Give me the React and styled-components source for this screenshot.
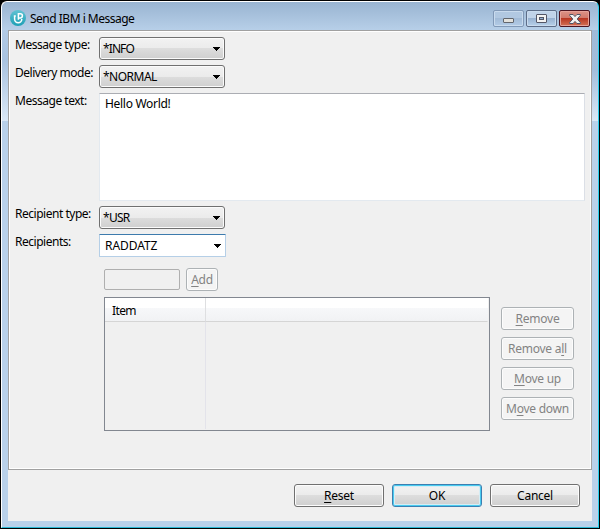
import styled, { createGlobalStyle, css } from 'styled-components'

const GlobalStyle = createGlobalStyle`
  * {
    box-sizing: border-box;
  }

  body {
    margin: 0;
    background: #000;
    font-family: 'Noto Sans', 'Open Sans', sans-serif;
    font-size: 12px;
    line-height: 16px;
    color: #000;
  }
`

const Window = styled.div`
  width: 600px;
  height: 529px;
  padding: 1px 1px 1px 0;
  border-left: 1px solid #000;
  background: #000;
`

const Frame = styled.div`
  height: 527px;
  display: flex;
  flex-direction: column;
  padding: 0 6px 6px;
  border: 1px solid #fff;
  border-right-color: #2ad0ee;
  border-bottom-color: #2bb8d4;
  border-radius: 6px 6px 0 0;
  background:
    linear-gradient(#9fbad8 0, #a3bedc 40px, #dae8f6 100%) right 28px / 6px 91px no-repeat,
    linear-gradient(#b2cae5 0, #a9c3e0 30px, #dae8f6 100%) left 28px / 6px 91px no-repeat,
    linear-gradient(#99b4d1 0, #b9d1ea 30px, #b9d1ea 100%);
`

const TitleBar = styled.header`
  flex: none;
  display: flex;
  align-items: flex-start;
  height: 28px;
  padding: 8px 2px 0 2px;
`

const Title = styled.h1`
  flex: 1;
  margin: 1px 0 0 4px;
  font-size: 12px;
  font-weight: 400;
  letter-spacing: -0.5px;
`

const WindowButton = styled.button`
  display: flex;
  align-items: center;
  justify-content: center;
  width: 31px;
  height: 17px;
  margin-left: 2px;
  padding: 0;
  border: 1px solid ${({ $kind }) => ({ min: '#8199b7', max: '#5d6d88', close: '#4c1420' })[$kind]};
  border-radius: 2px;
  box-shadow: inset 0 0 0 1px ${({ $kind }) => ($kind === 'close' ? '#e5a198' : '#c9dbee')};
  background: ${({ $kind }) =>
    ({
      min: 'linear-gradient(#b1c8e1 50%, #a2bbd7 50%, #b3cce7)',
      max: 'linear-gradient(#c0d3e9 50%, #98b2d1 50%, #b7d1ea)',
      close: 'linear-gradient(#dc9388 0, #d07769 50%, #b93723 50%, #d37256)',
    })[$kind]};
`

const Client = styled.main`
  flex: 1;
  display: flex;
  flex-direction: column;
  background: #f0f0f0;
`

const Panel = styled.section`
  height: 440px;
  padding: 6px 6px 0;
  border: 1px solid #a0a0a0;
  box-shadow: inset 0 0 0 1px #fff;
`

const Form = styled.div`
  display: grid;
  grid-template-columns: 84px 486px;
  grid-template-rows: 23px 23px 108px 23px 23px;
  row-gap: 5px;
`

const Label = styled.label`
  white-space: nowrap;
  letter-spacing: -0.48px;
`

const comboButton = css`
  border: 1px solid #707070;
  border-radius: 3px;
  box-shadow: inset 0 0 0 1px #fbfbfb;
  background: linear-gradient(#f2f2f2 0, #ebebeb 50%, #dddddd 50%, #cfcfcf 100%);
`

const editable = css`
  border: 1px solid #b5cfe7;
  border-top-color: #3d7bad;
  border-radius: 1px;
  background: #fff;
`

const Combo = styled.div`
  display: flex;
  align-items: center;
  justify-content: space-between;
  width: ${({ $editable }) => ($editable ? '127px' : '126px')};
  height: 23px;
  padding: 0 4px 0 ${({ $editable }) => ($editable ? '5px' : '3px')};
  letter-spacing: ${({ $track }) => $track || '-0.5px'};
  ${({ $editable }) => ($editable ? editable : comboButton)}
`

const MessageBox = styled.div`
  padding: 2px 5px;
  border: 1px solid #e3e9ef;
  border-top-color: #abadb3;
  border-right-color: #dbdfe6;
  background: #fff;
  letter-spacing: -0.3px;
`

const ItemEditor = styled.div`
  display: grid;
  grid-template-columns: 386px 73px;
  column-gap: 11px;
  row-gap: 6px;
  padding: 11px 0 0 89px;
`

const AddRow = styled.div`
  grid-column: 1 / -1;
  display: flex;
  align-items: center;
  gap: 6px;
`

const ItemInput = styled.input`
  width: 76px;
  height: 21px;
  padding: 0;
  border: 1px solid #afafaf;
  border-radius: 2px;
  background: #f0f0f0;
`

const Button = styled.button`
  width: ${({ $width }) => $width}px;
  height: 23px;
  padding: 0;
  font: inherit;
  line-height: 19px;
  letter-spacing: -0.25px;
  white-space: nowrap;
  color: #000;
  border: 1px solid #707070;
  border-radius: 3px;
  box-shadow: inset 0 0 0 1px #fcfcfc;
  background: linear-gradient(#f2f2f2 0, #ebebeb 50%, #dddddd 50%, #cfcfcf 100%);

  &:disabled {
    color: #838383;
    border-color: #adb2b5;
    background: #f4f4f4;
  }

  ${({ $primary }) =>
    $primary &&
    css`
      border-color: #3c7fb1;
      box-shadow: inset 0 0 0 1px #48cbf0, inset 0 0 0 2px #d5edf5;
    `}
`

const Key = styled.span`
  text-decoration: underline;
  text-underline-offset: 2px;
  text-decoration-thickness: 1px;
  text-decoration-skip-ink: none;
`

const Table = styled.div`
  display: grid;
  grid-template-columns: 101px 1fr;
  grid-template-rows: 24px 1fr;
  height: 134px;
  padding: 0 1px 1px 0;
  border: 1px solid #828790;
`

const HeaderCell = styled.div`
  padding: 5px 7px 0;
  border-right: 1px solid ${({ $last }) => ($last ? 'transparent' : '#dedfe1')};
  border-bottom: 1px solid #d5d5d5;
  background: linear-gradient(#fff 0, #fff 42%, #f7f8fa 42%, #f1f2f4 100%);
  letter-spacing: -0.6px;
`

const BodyCell = styled.div`
  border-right: 1px solid ${({ $last }) => ($last ? 'transparent' : '#e3e3ea')};
`

const SideButtons = styled.div`
  display: flex;
  flex-direction: column;
  gap: 7px;
  padding-top: 10px;
`

const Footer = styled.footer`
  display: flex;
  justify-content: flex-end;
  gap: 8px;
  padding: 14px 12px 0 0;
`

const Arrow = () => (
  <svg width="7" height="4" viewBox="0 0 7 4" shapeRendering="crispEdges">
    <path d="M0 0h7v1H6v1H5v1H4v1H3V3H2V2H1V1H0z" fill="#000" />
  </svg>
)

const AppIcon = () => (
  <svg width="16" height="16" viewBox="0 0 16 16">
    <defs>
      <linearGradient id="teal" x1="0" y1="0" x2="0" y2="1">
        <stop offset="0" stopColor="#62c3d3" />
        <stop offset="1" stopColor="#1c9fb5" />
      </linearGradient>
    </defs>
    <circle cx="8" cy="8" r="8" fill="url(#teal)" />
    <path
      d="M4.6 6.2v2.9a3.6 3.6 0 0 0 7.2 0M3.8 6h2M8.4 9.8V3.7h1.9a2.1 2.1 0 0 1 0 4.2H8.4"
      fill="none"
      stroke="#fff"
      strokeWidth="1.5"
    />
  </svg>
)

const MinimizeIcon = () => (
  <svg width="11" height="11" viewBox="0 0 11 11">
    <rect x="0.5" y="5.5" width="10" height="4" rx="0.5" fill="#e2e1dc" stroke="#62666d" />
  </svg>
)

const MaximizeIcon = () => (
  <svg width="11" height="9" viewBox="0 0 11 9">
    <rect x="0.5" y="0.5" width="10" height="8" rx="0.5" fill="#f2f2f2" stroke="#535666" />
    <rect x="3.5" y="3.5" width="4" height="2" fill="#91afd0" stroke="#535666" />
  </svg>
)

const CloseIcon = () => (
  <svg width="12" height="10" viewBox="0 0 12 10">
    <path
      d="M.7.5h3.4L6 2.6 7.9.5h3.4v1L8.2 5l3.1 3.5v1H7.9L6 7.4 4.1 9.5H.7v-1L3.8 5 .7 1.5z"
      fill="#f2f2f2"
      stroke="#535666"
    />
  </svg>
)

export default function App() {
  return (
    <Window>
      <GlobalStyle />
      <Frame>
        <TitleBar>
          <AppIcon />
          <Title>Send IBM i Message</Title>
          <WindowButton $kind="min" aria-label="Minimize">
            <MinimizeIcon />
          </WindowButton>
          <WindowButton $kind="max" aria-label="Maximize">
            <MaximizeIcon />
          </WindowButton>
          <WindowButton $kind="close" aria-label="Close">
            <CloseIcon />
          </WindowButton>
        </TitleBar>
        <Client>
          <Panel>
            <Form>
              <Label>Message type:</Label>
              <Combo $track="-0.9px">
                *INFO
                <Arrow />
              </Combo>
              <Label>Delivery mode:</Label>
              <Combo>
                *NORMAL
                <Arrow />
              </Combo>
              <Label>Message text:</Label>
              <MessageBox>Hello World!</MessageBox>
              <Label>Recipient type:</Label>
              <Combo $track="-0.7px">
                *USR
                <Arrow />
              </Combo>
              <Label>Recipients:</Label>
              <Combo $editable $track="-0.05px">
                RADDATZ
                <Arrow />
              </Combo>
            </Form>
            <ItemEditor>
              <AddRow>
                <ItemInput disabled />
                <Button $width={32} disabled>
                  <Key>A</Key>dd
                </Button>
              </AddRow>
              <Table>
                <HeaderCell>Item</HeaderCell>
                <HeaderCell $last />
                <BodyCell />
                <BodyCell $last />
              </Table>
              <SideButtons>
                <Button $width={73} disabled>
                  <Key>R</Key>emove
                </Button>
                <Button $width={73} disabled>
                  Remove a<Key>l</Key>l
                </Button>
                <Button $width={73} disabled>
                  <Key>M</Key>ove up
                </Button>
                <Button $width={73} disabled>
                  M<Key>o</Key>ve down
                </Button>
              </SideButtons>
            </ItemEditor>
          </Panel>
          <Footer>
            <Button $width={90}>
              <Key>R</Key>eset
            </Button>
            <Button $width={90} $primary>
              OK
            </Button>
            <Button $width={90}>Cancel</Button>
          </Footer>
        </Client>
      </Frame>
    </Window>
  )
}
